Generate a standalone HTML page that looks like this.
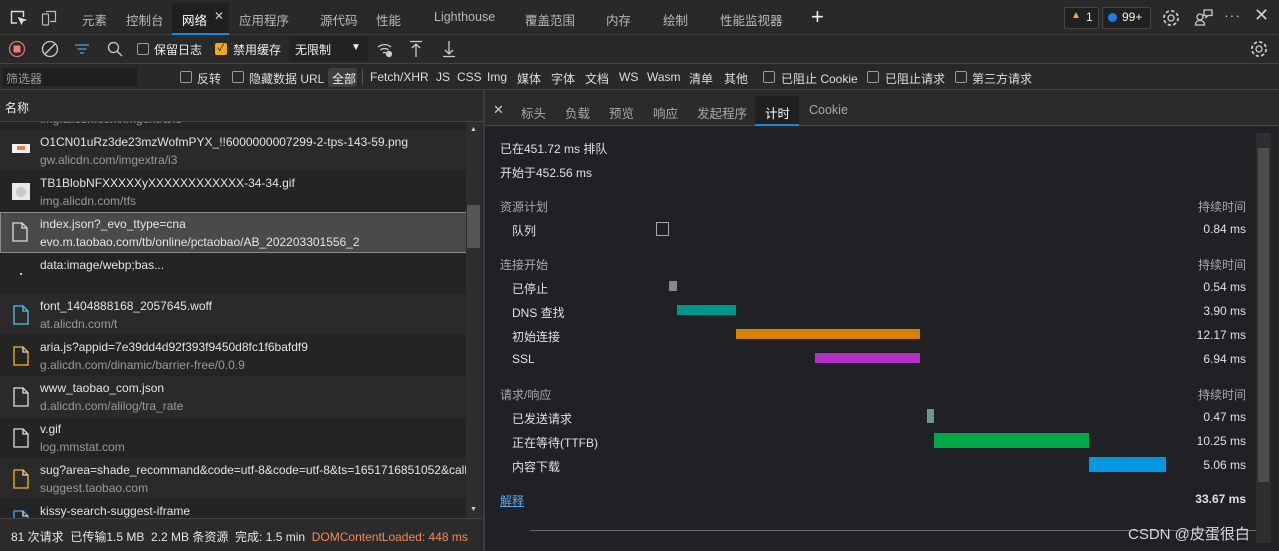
<!DOCTYPE html>
<html><head><meta charset="utf-8"><style>
*{margin:0;padding:0;box-sizing:border-box}
body{width:1279px;height:551px;overflow:hidden;background:#292929;font-family:"Liberation Sans","Noto Sans CJK SC",sans-serif;font-size:12px;color:#ddd;position:relative}
div{white-space:nowrap}
.a{position:absolute;white-space:nowrap}
.t{color:#b8b8b8;font-size:12.5px}
.cb{position:absolute;width:12px;height:12px;border:1px solid #9a9a9a;border-radius:2px}
.row{position:absolute;left:0;width:466px;height:41px;overflow:hidden}
.row .n{position:absolute;left:40px;top:5px;color:#e4e4e4;font-size:12px}
.row .d{position:absolute;left:40px;top:23px;color:#9a9a9a;font-size:12px}
.fi{position:absolute;left:13px;top:11px;width:16px;height:20px}
.lbl{position:absolute;left:512px;color:#e0e0e0}
.dur{position:absolute;right:33px;color:#e0e0e0}
.sec{position:absolute;left:500px;color:#a8a8a8}
.sech{position:absolute;right:33px;color:#a8a8a8}
.bar{position:absolute}
.f{position:absolute;top:70px;color:#ddd}
</style></head><body>
<div class="a" style="left:0;top:0;width:1279px;height:35px;background:#292929;border-bottom:1px solid #3c3c3c"></div>
<svg class="a" style="left:9px;top:9px" width="18" height="18" viewBox="0 0 18 18" fill="none" stroke="#ddd" stroke-width="1.4"><path d="M8 14H2.5V2.5h12V8"/><path d="M10 9l6 2-2.5 1 -1 2.5z" fill="#ddd"/></svg>
<svg class="a" style="left:40px;top:9px" width="18" height="18" viewBox="0 0 18 18" fill="none" stroke="#bbb" stroke-width="1.2"><rect x="2.5" y="5" width="6" height="11" rx="1"/><path d="M6 2.5h9.5v10H10"/></svg>
<div class="a t" style="left:82px;top:10px">元素</div>
<div class="a t" style="left:126px;top:10px">控制台</div>
<div class="a" style="left:172px;top:3px;width:57px;height:32px;background:#1f1f1f;border-bottom:2px solid #1a86e0"></div>
<div class="a" style="left:182px;top:10px;color:#fff;font-size:12.5px">网络</div>
<div class="a" style="left:214px;top:9px;color:#ccc;font-size:12px">✕</div>
<div class="a t" style="left:239px;top:10px">应用程序</div>
<div class="a t" style="left:320px;top:10px">源代码</div>
<div class="a t" style="left:376px;top:10px">性能</div>
<div class="a t" style="left:434px;top:10px">Lighthouse</div>
<div class="a t" style="left:525px;top:10px">覆盖范围</div>
<div class="a t" style="left:606px;top:10px">内存</div>
<div class="a t" style="left:663px;top:10px">绘制</div>
<div class="a t" style="left:720px;top:10px">性能监视器</div>
<div class="a" style="left:811px;top:4px;color:#eee;font-size:22px;font-weight:300">+</div>
<div class="a" style="left:1064px;top:7px;width:35px;height:22px;border:1px solid #444;border-radius:2px;background:#202020"></div>
<div class="a" style="left:1071px;top:10px;color:#f2b22d;font-size:10px">▲</div>
<div class="a" style="left:1086px;top:10px;color:#eee">1</div>
<div class="a" style="left:1102px;top:7px;width:49px;height:22px;border:1px solid #444;border-radius:2px;background:#202020"></div>
<div class="a" style="left:1108px;top:13px;width:9px;height:9px;border-radius:50%;background:#1a7ae6"></div>
<div class="a" style="left:1122px;top:10px;color:#eee">99+</div>
<svg class="a" style="left:1161px;top:8px" width="20" height="20" viewBox="0 0 20 20" fill="none" stroke="#ccc" stroke-width="1.3"><circle cx="10" cy="10" r="3"/><circle cx="10" cy="10" r="6.5" stroke-dasharray="3 2.1" stroke-width="3"/><circle cx="10" cy="10" r="5.5" stroke="#292929" stroke-width="1.5"/></svg>
<svg class="a" style="left:1194px;top:8px" width="20" height="20" viewBox="0 0 20 20" fill="none" stroke="#ccc" stroke-width="1.3"><circle cx="6" cy="9" r="3"/><path d="M1.5 17c0-3 2-4.5 4.5-4.5s4.5 1.5 4.5 4.5z"/><path d="M10 2h8v5.5h-4l-2 2v-2h-2z"/></svg>
<div class="a" style="left:1224px;top:7px;color:#ccc;font-size:14px;letter-spacing:1px">···</div>
<div class="a" style="left:1254px;top:5px;color:#ccc;font-size:18px">✕</div>
<div class="a" style="left:0;top:63px;width:1279px;height:1px;background:#444"></div>
<svg class="a" style="left:8px;top:40px" width="18" height="18"><circle cx="9" cy="9" r="7.5" fill="none" stroke="#e57373" stroke-width="1.3"/><rect x="5.5" y="5.5" width="7" height="7" rx="1" fill="#ef7b7b"/></svg>
<svg class="a" style="left:41px;top:40px" width="18" height="18" fill="none" stroke="#ccc" stroke-width="1.3"><circle cx="9" cy="9" r="7.5"/><path d="M4 14L14 4"/></svg>
<svg class="a" style="left:74px;top:42px" width="16" height="14" stroke="#4aa3e8" stroke-width="1.3"><path d="M1 3h14M3.5 7h9M6 11h4"/></svg>
<svg class="a" style="left:106px;top:40px" width="18" height="18" fill="none" stroke="#ccc" stroke-width="1.3"><circle cx="7.5" cy="7.5" r="5"/><path d="M11 11l5 5"/></svg>
<div class="cb" style="left:137px;top:43px"></div>
<div class="a" style="left:154px;top:41px;color:#eee">保留日志</div>
<div class="a" style="left:215px;top:43px;width:12px;height:12px;background:#f0a81e;border-radius:2px;color:#222;font-size:10px;line-height:12px;text-align:center">✓</div>
<div class="a" style="left:233px;top:41px;color:#eee">禁用缓存</div>
<div class="a" style="left:289px;top:37px;width:79px;height:24px;background:#222"></div>
<div class="a" style="left:295px;top:41px;color:#eee">无限制</div>
<div class="a" style="left:351px;top:42px;color:#eee;font-size:10px">▼</div>
<svg class="a" style="left:376px;top:41px" width="18" height="18" fill="none" stroke="#ccc" stroke-width="1.3"><path d="M2 6a10 10 0 0 1 13 0M4.5 9a6 6 0 0 1 8 0M7 12a2.5 2.5 0 0 1 3 0"/><circle cx="13" cy="13" r="2.5" fill="#ccc"/></svg>
<svg class="a" style="left:408px;top:40px" width="16" height="18" fill="none" stroke="#ccc" stroke-width="1.3"><path d="M2 1.5h12M8 4v13M4 8l4-4 4 4"/></svg>
<svg class="a" style="left:441px;top:40px" width="16" height="18" fill="none" stroke="#ccc" stroke-width="1.3"><path d="M2 16.5h12M8 1v13M4 10l4 4 4-4"/></svg>
<svg class="a" style="left:1249px;top:39px" width="20" height="20" viewBox="0 0 20 20" fill="none" stroke="#ccc" stroke-width="1.3"><circle cx="10" cy="10" r="3"/><circle cx="10" cy="10" r="6.5" stroke-dasharray="3 2.1" stroke-width="3"/><circle cx="10" cy="10" r="5.5" stroke="#292929" stroke-width="1.5"/></svg>
<div class="a" style="left:3px;top:68px;width:134px;height:18px;background:#1e1f21"></div>
<div class="a" style="left:6px;top:70px;color:#9a9a9a">筛选器</div>
<div class="cb" style="left:180px;top:71px"></div><div class="f" style="left:197px">反转</div>
<div class="cb" style="left:232px;top:71px"></div><div class="f" style="left:249px">隐藏数据 URL</div>
<div class="a" style="left:328px;top:68px;width:29px;height:19px;background:#3f3f3f;border-radius:3px"></div>
<div class="a" style="left:332px;top:70px;color:#eee">全部</div>
<div class="a" style="left:362px;top:69px;width:1px;height:16px;background:#555"></div>
<div class="f" style="left:370px">Fetch/XHR</div>
<div class="f" style="left:436px">JS</div>
<div class="f" style="left:457px">CSS</div>
<div class="f" style="left:487px">Img</div>
<div class="f" style="left:517px">媒体</div>
<div class="f" style="left:551px">字体</div>
<div class="f" style="left:585px">文档</div>
<div class="f" style="left:619px">WS</div>
<div class="f" style="left:647px">Wasm</div>
<div class="f" style="left:689px">清单</div>
<div class="f" style="left:724px">其他</div>
<div class="cb" style="left:763px;top:71px"></div><div class="f" style="left:781px">已阻止 Cookie</div>
<div class="cb" style="left:867px;top:71px"></div><div class="f" style="left:885px">已阻止请求</div>
<div class="cb" style="left:955px;top:71px"></div><div class="f" style="left:972px">第三方请求</div>
<div class="a" style="left:0;top:89px;width:1279px;height:1px;background:#444"></div>
<div class="a" style="left:0;top:90px;width:484px;height:461px;background:#242424"></div>
<div class="a" style="left:0;top:90px;width:484px;height:32px;background:#2b2b2b;border-bottom:1px solid #444"></div>
<div class="a" style="left:5px;top:99px;color:#eee">名称</div>
<div class="row" style="top:122px;height:8px;background:#242424"><div class="d" style="top:-10px">img.alicdn.com/imgextra/i3</div></div>
<div class="row" style="top:130px;background:#2a2a2a"><div class="a" style="left:12px;top:14px;width:18px;height:9px;background:#f2f2f2"><div style="margin:2px 5px;height:4px;background:#ee7a4a"></div></div><div class="n">O1CN01uRz3de23mzWofmPYX_!!6000000007299-2-tps-143-59.png</div><div class="d">gw.alicdn.com/imgextra/i3</div></div>
<div class="row" style="top:171px;background:#242424"><div class="a" style="left:12px;top:12px;width:18px;height:17px;background:#e8e8e8"><div style="margin:4px 4px;width:10px;height:10px;border-radius:50%;background:#c8c8c8"></div></div><div class="n">TB1BlobNFXXXXXyXXXXXXXXXXXX-34-34.gif</div><div class="d">img.alicdn.com/tfs</div></div>
<div class="row" style="top:212px;height:41px;background:#4a4a4a;border:1px solid #8a8a8a;width:467px"><svg class="fi" viewBox="0 0 16 20" fill="none" stroke="#ddd" stroke-width="1.3" style="top:9px;left:11px"><path d="M1 1h9l5 5v13H1z"/><path d="M10 1v5h5"/></svg><div class="n" style="top:4px;left:39px">index.json?_evo_ttype=cna</div><div class="d" style="top:22px;left:39px;color:#e4e4e4">evo.m.taobao.com/tb/online/pctaobao/AB_202203301556_2</div></div>
<div class="row" style="top:253px;background:#242424"><div class="a" style="left:20px;top:20px;width:2px;height:2px;background:#ccc"></div><div class="n">data:image/webp;bas...</div></div>
<div class="row" style="top:294px;background:#2a2a2a"><svg class="fi" viewBox="0 0 16 20" fill="none" stroke="#4fc3e8" stroke-width="1.3"><path d="M1 1h9l5 5v13H1z"/><path d="M10 1v5h5"/></svg><div class="n">font_1404888168_2057645.woff</div><div class="d">at.alicdn.com/t</div></div>
<div class="row" style="top:335px;background:#242424"><svg class="fi" viewBox="0 0 16 20" fill="none" stroke="#f2b52d" stroke-width="1.3"><path d="M1 1h9l5 5v13H1z"/><path d="M10 1v5h5" stroke="#ddd"/></svg><div class="n">aria.js?appid=7e39dd4d92f393f9450d8fc1f6bafdf9</div><div class="d">g.alicdn.com/dinamic/barrier-free/0.0.9</div></div>
<div class="row" style="top:376px;background:#2a2a2a"><svg class="fi" viewBox="0 0 16 20" fill="none" stroke="#ddd" stroke-width="1.3"><path d="M1 1h9l5 5v13H1z"/><path d="M10 1v5h5"/></svg><div class="n">www_taobao_com.json</div><div class="d">d.alicdn.com/alilog/tra_rate</div></div>
<div class="row" style="top:417px;background:#242424"><svg class="fi" viewBox="0 0 16 20" fill="none" stroke="#ddd" stroke-width="1.3"><path d="M1 1h9l5 5v13H1z"/><path d="M10 1v5h5"/></svg><div class="n">v.gif</div><div class="d">log.mmstat.com</div></div>
<div class="row" style="top:458px;background:#2a2a2a"><svg class="fi" viewBox="0 0 16 20" fill="none" stroke="#f2b52d" stroke-width="1.3"><path d="M1 1h9l5 5v13H1z"/><path d="M10 1v5h5" stroke="#ddd"/></svg><div class="n">sug?area=shade_recommand&amp;code=utf-8&amp;code=utf-8&amp;ts=1651716851052&amp;callback</div><div class="d">suggest.taobao.com</div></div>
<div class="row" style="top:499px;height:19px;background:#242424"><svg class="fi" viewBox="0 0 16 20" fill="none" stroke="#4aa3e8" stroke-width="1.3"><path d="M1 1h9l5 5v13H1z"/><path d="M10 1v5h5" stroke="#ddd"/></svg><div class="n">kissy-search-suggest-iframe</div></div>
<div class="a" style="left:466px;top:122px;width:16px;height:396px;background:#2e2e2e"></div>
<div class="a" style="left:470px;top:126px;color:#ccc;font-size:7px">▲</div>
<div class="a" style="left:470px;top:506px;color:#ccc;font-size:7px">▼</div>
<div class="a" style="left:467px;top:205px;width:13px;height:43px;background:#555"></div>
<div class="a" style="left:0;top:518px;width:484px;height:33px;background:#2b2b2b;border-top:1px solid #444"></div>
<div class="a" style="left:11px;top:528px;color:#e6e6e6">81 次请求&nbsp; 已传输1.5 MB&nbsp; 2.2 MB 条资源&nbsp; 完成: 1.5 min&nbsp; <span style="color:#f08a5a">DOMContentLoaded: 448 ms</span></div>
<div class="a" style="left:483px;top:90px;width:2px;height:461px;background:#3c3c3c"></div>
<div class="a" style="left:485px;top:94px;width:794px;height:32px;background:#2b2b2b;border-bottom:1px solid #444"></div>
<div class="a" style="left:493px;top:102px;color:#ccc;font-size:13px">✕</div>
<div class="a t" style="left:521px;top:103px;color:#a8a8a8">标头</div>
<div class="a t" style="left:565px;top:103px;color:#a8a8a8">负载</div>
<div class="a t" style="left:609px;top:103px;color:#a8a8a8">预览</div>
<div class="a t" style="left:653px;top:103px;color:#a8a8a8">响应</div>
<div class="a t" style="left:697px;top:103px;color:#a8a8a8">发起程序</div>
<div class="a" style="left:755px;top:96px;width:44px;height:30px;background:#1f1f1f;border-bottom:2px solid #1a86e0"></div>
<div class="a" style="left:765px;top:103px;color:#fff;font-size:12.5px">计时</div>
<div class="a t" style="left:809px;top:103px;color:#a8a8a8">Cookie</div>
<div class="a" style="left:485px;top:127px;width:794px;height:424px;background:#202124"></div>
<div class="a" style="left:500px;top:140px;color:#e0e0e0">已在451.72 ms 排队</div>
<div class="a" style="left:500px;top:164px;color:#e0e0e0">开始于452.56 ms</div>
<div class="sec" style="top:198px">资源计划</div><div class="sech" style="top:198px">持续时间</div>
<div class="lbl" style="top:222px">队列</div><div class="dur" style="top:222px">0.84 ms</div>
<div class="bar" style="left:656px;top:222px;width:13px;height:14px;border:1px solid #aaa"></div>
<div class="sec" style="top:256px">连接开始</div><div class="sech" style="top:256px">持续时间</div>
<div class="lbl" style="top:280px">已停止</div><div class="dur" style="top:280px">0.54 ms</div>
<div class="bar" style="left:669px;top:281px;width:8px;height:10px;background:#888"></div>
<div class="lbl" style="top:304px">DNS 查找</div><div class="dur" style="top:304px">3.90 ms</div>
<div class="bar" style="left:677px;top:305px;width:59px;height:10px;background:#009688"></div>
<div class="lbl" style="top:328px">初始连接</div><div class="dur" style="top:328px">12.17 ms</div>
<div class="bar" style="left:736px;top:329px;width:184px;height:10px;background:#d68100"></div>
<div class="lbl" style="top:352px">SSL</div><div class="dur" style="top:352px">6.94 ms</div>
<div class="bar" style="left:815px;top:353px;width:105px;height:10px;background:#b22fc8"></div>
<div class="sec" style="top:386px">请求/响应</div><div class="sech" style="top:386px">持续时间</div>
<div class="lbl" style="top:410px">已发送请求</div><div class="dur" style="top:410px">0.47 ms</div>
<div class="bar" style="left:927px;top:409px;width:7px;height:14px;background:#6b9594"></div>
<div class="lbl" style="top:434px">正在等待(TTFB)</div><div class="dur" style="top:434px">10.25 ms</div>
<div class="bar" style="left:934px;top:433px;width:155px;height:15px;background:#00a846"></div>
<div class="lbl" style="top:458px">内容下载</div><div class="dur" style="top:458px">5.06 ms</div>
<div class="bar" style="left:1089px;top:457px;width:77px;height:15px;background:#0099e0"></div>
<div class="a" style="left:500px;top:492px;color:#5aa8f0;text-decoration:underline">解释</div>
<div class="dur" style="top:492px;font-weight:bold">33.67 ms</div>
<div class="a" style="left:530px;top:530px;width:726px;height:1px;background:#666"></div>
<div class="a" style="left:1256px;top:133px;width:15px;height:410px;background:#2e2e2e"></div>
<div class="a" style="left:1258px;top:148px;width:11px;height:334px;background:#4d4d4d"></div>
<div class="a" style="left:1128px;top:523px;color:#d8d8d8;font-size:15px">CSDN @皮蛋很白</div>
</body></html>
